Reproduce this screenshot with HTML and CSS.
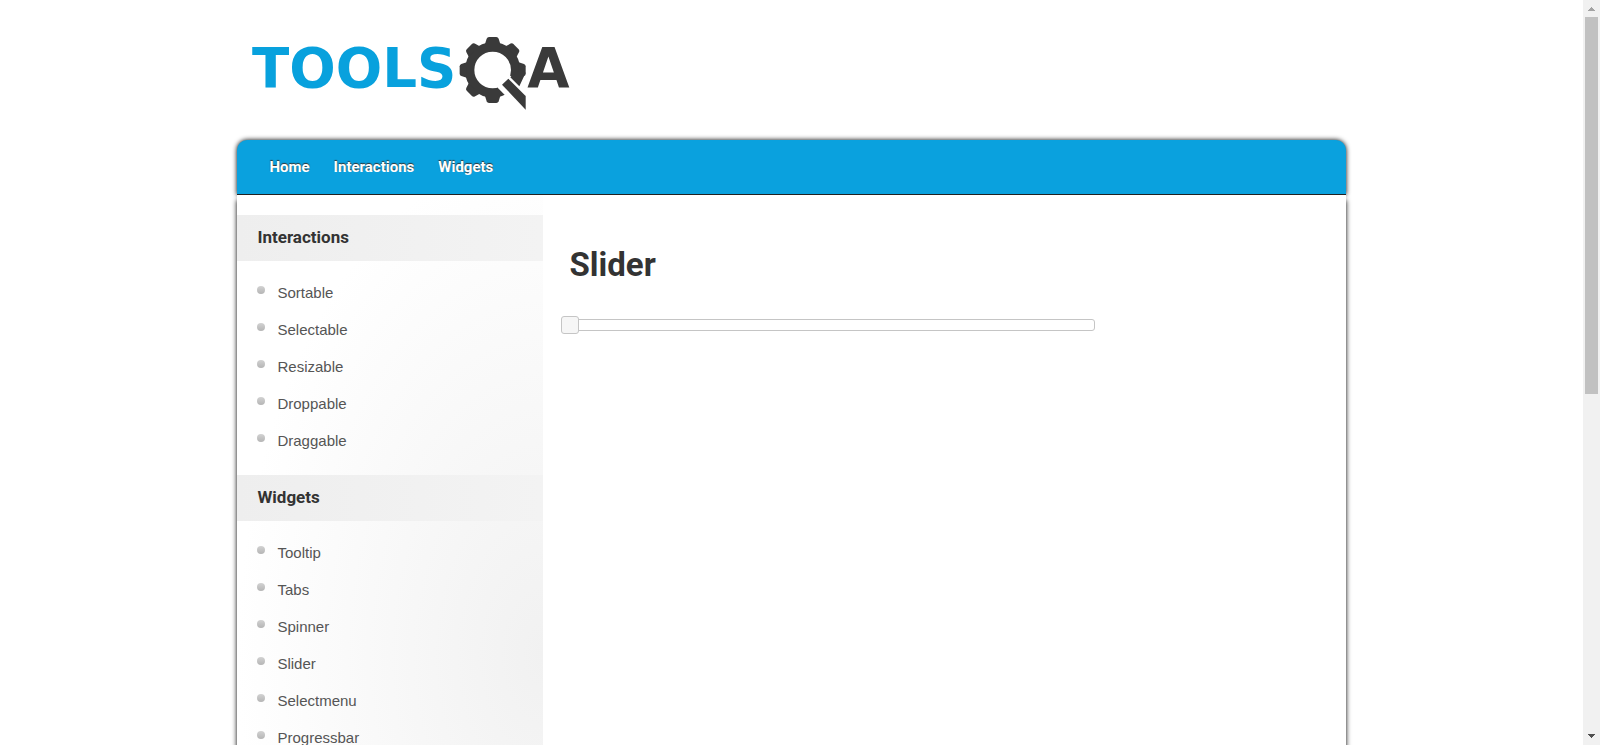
FILE: index.html
```html
<!DOCTYPE html>
<html lang="en">
<head>
<meta charset="utf-8">
<title>Slider</title>
<link rel="stylesheet" href="styles.css">
</head>
<body>
<div class="window">
  <div class="page">
    <div class="container">
      <header class="header">
        <a class="logo" href="#" aria-label="ToolsQA">
          <svg viewBox="0 0 1020 240" width="340" height="80">
            <text class="logo-tools" x="0" y="170">TOOLS</text>
            <text class="logo-a" x="826" y="170">A</text>
            <g class="logo-gear" transform="translate(722 120)">
              <circle r="69" fill="none" stroke-width="28"/>
              <g stroke="none">
                <path id="tooth" d="M-23-78 L-18-94 Q-16-99-11-99 H11 Q16-99 18-94 L23-78Z"/>
                <use href="#tooth" transform="rotate(45)"/>
                <use href="#tooth" transform="rotate(90)"/>
                <use href="#tooth" transform="rotate(180)"/>
                <use href="#tooth" transform="rotate(225)"/>
                <use href="#tooth" transform="rotate(270)"/>
                <use href="#tooth" transform="rotate(315)"/>
              </g>
              <path class="logo-gap" d="M15 53 L28 34 L50 14 L99 61 V130 L90 130Z"/>
              <path stroke="none" d="M53 22 L80 49 L99 8 L82 0Z"/>
              <path stroke="none" d="M28 44 L47 26 L99 78 V119Z"/>
            </g>
          </svg>
        </a>
      </header>
      <nav class="nav">
        <a href="#">Home</a>
        <a href="#">Interactions</a>
        <a href="#">Widgets</a>
      </nav>
      <div class="content">
        <aside class="sidebar">
          <h2>Interactions</h2>
          <ul>
            <li><a href="#">Sortable</a></li>
            <li><a href="#">Selectable</a></li>
            <li><a href="#">Resizable</a></li>
            <li><a href="#">Droppable</a></li>
            <li><a href="#">Draggable</a></li>
          </ul>
          <h2>Widgets</h2>
          <ul>
            <li><a href="#">Tooltip</a></li>
            <li><a href="#">Tabs</a></li>
            <li><a href="#">Spinner</a></li>
            <li><a href="#">Slider</a></li>
            <li><a href="#">Selectmenu</a></li>
            <li><a href="#">Progressbar</a></li>
          </ul>
        </aside>
        <main class="main">
          <h1 id="title">Slider</h1>
          <input class="slider" type="range" min="0" max="100" value="0" aria-labelledby="title">
        </main>
      </div>
    </div>
  </div>
  <div class="scrollbar" aria-hidden="true">
    <svg class="arrow-up" viewBox="0 0 17 17" width="17" height="17" shape-rendering="crispEdges"><path d="M5 11V10H6V9H7V8H8V7H9V8H10V9H11V10H12V11Z"/></svg>
    <div class="scroll-track"><div class="scroll-thumb"></div></div>
    <svg class="arrow-down" viewBox="0 0 17 17" width="17" height="17" shape-rendering="crispEdges"><path d="M5 6V7H6V8H7V9H8V10H9V9H10V8H11V7H12V6Z"/></svg>
  </div>
</div>
</body>
</html>
```
FILE: styles.css
```css
* { box-sizing: border-box; }
body {
  margin: 0;
  background: #fff;
  color: #555;
  font-family: "Liberation Sans", Arial, sans-serif;
  font-size: 15px;
}
a { color: inherit; text-decoration: none; }
.window { display: flex; height: 100vh; overflow: hidden; }
.page { flex: 1; min-width: 0; overflow: hidden; }
.container { width: 70%; margin: 0 auto; }
.header { height: 140px; padding: 30px 15px 0; }
.logo { display: block; }
.logo svg { display: block; }
.logo text { font-family: "DejaVu Sans", sans-serif; font-weight: bold; font-size: 164px; }
.logo-tools { fill: #08a1dd; }
.logo-a { fill: #3a3a3a; }
.logo-gear { fill: #3a3a3a; stroke: #3a3a3a; }
.logo-gear .logo-gap { fill: #fff; stroke: none; }
.nav {
  display: flex;
  align-items: center;
  gap: 24px;
  height: 55px;
  padding: 0 32px;
  background: #0aa1de;
  border-bottom: 1px solid #222;
  border-radius: 10px 10px 0 0;
  box-shadow: 0 0 5px #000;
  color: #fff;
  font: bold 15px/20px Roboto, sans-serif;
  text-shadow: 0 -1px 1px #333;
}
.content {
  position: relative;
  display: flex;
  min-height: 1000px;
  background: #fff;
  box-shadow: 0 5px 5px #000;
}
.sidebar {
  flex: none;
  width: 306px;
  padding-top: 20px;
  background: radial-gradient(ellipse 306px 500px at 100% 460px, #f1f1f1, #fff);
}
h1, h2 { margin: 0; color: #333; font-family: Roboto, sans-serif; }
.sidebar h2 {
  padding: 0 20px 2px;
  background: linear-gradient(90deg, #eee, #f3f3f3);
  font-size: 17px;
  line-height: 44px;
}
.sidebar ul { margin: 0; padding: 13px 20px 16px; list-style: none; }
.sidebar li { display: flex; align-items: center; gap: 12px; line-height: 37px; }
.sidebar li::before {
  content: "";
  width: 8px;
  height: 8px;
  margin-bottom: 6px;
  border-radius: 50%;
  background: linear-gradient(#d2d2d2, #b5b5b5);
}
.main { flex: 1; min-width: 0; padding: 49px 26px; }
h1 { font-size: 33px; line-height: 42px; }
.slider {
  display: block;
  width: 70%;
  height: 18px;
  margin: 30px 0 0;
  background: none;
  appearance: none;
}
.slider::-webkit-slider-runnable-track {
  height: 12px;
  border: 1px solid #c5c5c5;
  border-radius: 3px;
}
.slider::-webkit-slider-thumb {
  appearance: none;
  width: 18px;
  height: 18px;
  margin: -4px 0 0 -9px;
  border: 1px solid #c5c5c5;
  border-radius: 3px;
  background: #f6f6f6;
}
.scrollbar { display: flex; flex: none; flex-direction: column; width: 17px; background: #f1f1f1; }
.scrollbar svg { flex: none; display: block; }
.arrow-up { fill: #a3a3a3; }
.arrow-down { fill: #505050; }
.scroll-track { flex: 1; padding: 0 2px; }
.scroll-thumb { height: 53%; background: #c1c1c1; }
```
